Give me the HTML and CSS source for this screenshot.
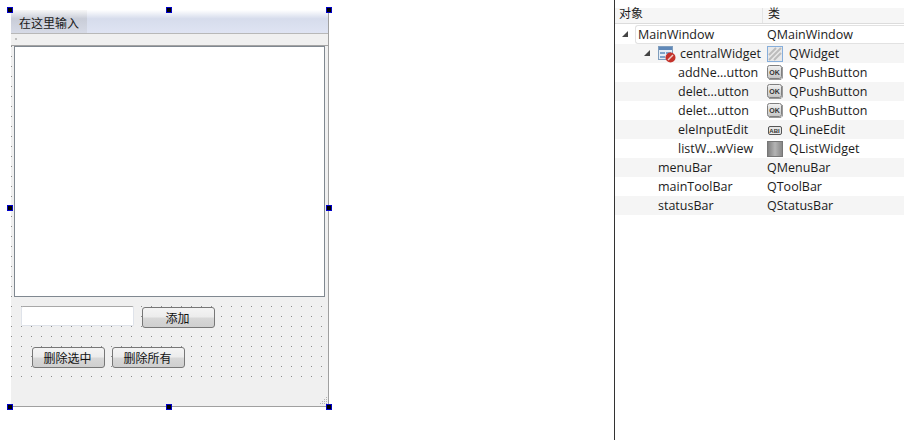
FILE: index.html
```html
<!DOCTYPE html>
<html lang="zh">
<head>
<meta charset="utf-8">
<title>Qt Designer</title>
<link rel="stylesheet" href="styles.css">
</head>
<body>
<main class="canvas">
  <div class="form">
    <div class="menubar"><span class="menu-item">在这里输入</span></div>
    <div class="toolbar"><i class="tool-grip"></i></div>
    <div class="central">
      <div class="list"></div>
      <div class="row row-add">
        <input class="line-edit" type="text">
        <button class="btn" type="button">添加</button>
      </div>
      <div class="row row-del">
        <button class="btn" type="button">删除选中</button>
        <button class="btn" type="button">删除所有</button>
      </div>
    </div>
    <div class="statusbar">
      <svg class="grip" width="11" height="11" viewBox="0 0 11 11"><g fill="#b4b4b4"><rect x="8" y="1" width="1" height="1"/><rect x="6" y="3" width="1" height="1"/><rect x="8" y="3" width="1" height="1"/><rect x="4" y="5" width="1" height="1"/><rect x="6" y="5" width="1" height="1"/><rect x="8" y="5" width="1" height="1"/><rect x="2" y="7" width="1" height="1"/><rect x="4" y="7" width="1" height="1"/><rect x="6" y="7" width="1" height="1"/><rect x="8" y="7" width="1" height="1"/></g></svg>
    </div>
    <i class="handle h-tl"></i><i class="handle h-tc"></i><i class="handle h-tr"></i>
    <i class="handle h-ml"></i><i class="handle h-mr"></i>
    <i class="handle h-bl"></i><i class="handle h-bc"></i><i class="handle h-br"></i>
  </div>
</main>
<aside class="inspector">
  <svg class="defs" width="0" height="0"><defs>
    <linearGradient id="okg" x1="0" y1="0" x2="0" y2="1"><stop offset="0" stop-color="#f2f2f2"/><stop offset="1" stop-color="#c4c4c4"/></linearGradient>
    <linearGradient id="lw"><stop offset="0" stop-color="#7d7d7d"/><stop offset=".5" stop-color="#b4b4b4"/><stop offset="1" stop-color="#858585"/></linearGradient>
    <g id="ok"><rect x="0.5" y="0.5" width="14" height="13" rx="2" fill="url(#okg)" stroke="#808080"/><path d="M2 14.5H14L15.5 13V2" fill="none" stroke="#9a9a9a"/><text x="7.5" y="9.5" class="ok-text">OK</text></g>
  </defs></svg>
  <div class="head"><span class="col-name">对象</span><span class="col-class">类</span></div>
  <div class="tree">
    <div class="tr selected"><span class="col-name l0"><i class="arrow a0"></i><span class="sel-text">MainWindow</span></span><span class="col-class">QMainWindow</span></div>
    <div class="tr alt"><span class="col-name l1"><i class="arrow a1"></i>
      <svg class="obj-icon" width="18" height="18" viewBox="0 0 18 18"><rect x="0.5" y="1.5" width="14" height="13" fill="#e4edf6" stroke="#7f9dbd"/><rect x="1" y="2" width="13" height="3" fill="#5f88b8"/><rect x="2" y="7" width="5" height="2" fill="#7fa3c9"/><rect x="8" y="7" width="5" height="2" fill="#7fa3c9"/><rect x="2" y="11" width="5" height="2" fill="#7fa3c9"/><circle cx="12.5" cy="12.5" r="5" fill="#c4322a"/><path d="M10 15 15 10" stroke="#f0cfc9" stroke-width="1.4"/></svg>
      <span>centralWidget</span></span>
      <span class="col-class"><svg class="cls-icon" width="16" height="16" viewBox="0 0 16 16"><rect x="0.5" y="0.5" width="15" height="15" fill="#e8e8e8" stroke="#86aedb"/><path d="M2 9 9 2M2 14 14 2M7 14 14 7" stroke="#bcbcbc" stroke-width="2"/></svg>QWidget</span></div>
    <div class="tr"><span class="col-name l2">addNe...utton</span><span class="col-class"><svg class="cls-icon" width="16" height="16" viewBox="0 0 16 16"><use href="#ok"/></svg>QPushButton</span></div>
    <div class="tr alt"><span class="col-name l2">delet...utton</span><span class="col-class"><svg class="cls-icon" width="16" height="16" viewBox="0 0 16 16"><use href="#ok"/></svg>QPushButton</span></div>
    <div class="tr"><span class="col-name l2">delet...utton</span><span class="col-class"><svg class="cls-icon" width="16" height="16" viewBox="0 0 16 16"><use href="#ok"/></svg>QPushButton</span></div>
    <div class="tr alt"><span class="col-name l2">eleInputEdit</span><span class="col-class"><svg class="cls-icon" width="16" height="16" viewBox="0 0 16 16"><rect x="1.5" y="4.5" width="13" height="8" rx="1.5" fill="#e6e6e6" stroke="#555"/><text x="7.5" y="11" class="abi-text">ABI</text></svg>QLineEdit</span></div>
    <div class="tr"><span class="col-name l2">listW...wView</span><span class="col-class"><svg class="cls-icon" width="16" height="16" viewBox="0 0 16 16"><rect x="0.5" y="0.5" width="15" height="15" fill="url(#lw)" stroke="#777"/></svg>QListWidget</span></div>
    <div class="tr alt"><span class="col-name l1b">menuBar</span><span class="col-class">QMenuBar</span></div>
    <div class="tr"><span class="col-name l1b">mainToolBar</span><span class="col-class">QToolBar</span></div>
    <div class="tr alt"><span class="col-name l1b">statusBar</span><span class="col-class">QStatusBar</span></div>
  </div>
</aside>
</body>
</html>
```

FILE: styles.css
```css
* { box-sizing: border-box; }
html, body { margin: 0; height: 100%; }
body {
  display: flex;
  width: 904px;
  height: 440px;
  overflow: hidden;
  background: #fff;
  font-family: "Noto Sans CJK SC", sans-serif;
  font-size: 12px;
  color: #1a1a1a;
}
.canvas { width: 614px; flex: none; padding: 10px 0 0 11px; }
.form {
  position: relative;
  width: 318px;
  height: 397px;
  display: flex;
  flex-direction: column;
  background: #f0f0f0;
  border-right: 1px solid #a0a0a0;
  border-bottom: 1px solid #a0a0a0;
}
.menubar {
  height: 24px;
  flex: none;
  background: linear-gradient(#fff 0, #d6dcec 38%, #dfe4f3 100%);
  border-bottom: 1px solid #b8b8b8;
}
.menu-item {
  display: inline-block;
  width: 76px;
  height: 23px;
  padding: 4px 0 0 8px;
  line-height: 17px;
  background: linear-gradient(#f8f8f8 0, #c9cdd8 38%, #d6dae6 100%);
}
.toolbar {
  height: 12px;
  flex: none;
  position: relative;
  background: #f0f0f0;
  border-bottom: 1px solid #a4a4a4;
}
.tool-grip { position: absolute; left: 4px; top: 4px; width: 2px; height: 2px; background: #c0c0c0; }
.central {
  height: 331px;
  flex: none;
  padding: 0 3px;
  background-image: radial-gradient(circle at 0.5px 0.5px, #8c8c8c 0.7px, transparent 0.7px);
  background-size: 10px 10px;
  background-position: 0 0;
}
.list {
  width: 311px;
  height: 251px;
  background: #fff;
  border: 1px solid #808890;
}
.row { display: flex; align-items: flex-start; }
.row-add { margin-top: 9px; padding-left: 7px; gap: 8px; }
.row-del { margin-top: 18px; padding-left: 18px; gap: 7px; }
.line-edit {
  width: 113px;
  height: 20px;
  margin: 0;
  padding: 0;
  background: #fff;
  border: 1px solid #dfe3ea;
  border-top-color: #a8a8a8;
  border-radius: 2px;
}
.btn {
  width: 73px;
  height: 21px;
  margin: 1px 0 0;
  padding: 0 2px 0 0;
  font: 12px/18px "Noto Sans CJK SC", sans-serif;
  color: #111;
  border: 1px solid #777;
  border-radius: 3px;
  background: linear-gradient(#f4f4f4 0, #ececec 48%, #d8d8d8 52%, #cfcfcf 100%);
}
.statusbar { flex: 1; position: relative; background: #f0f0f0; }
.grip { position: absolute; right: -1px; bottom: -1px; }
.handle { position: absolute; width: 6px; height: 6px; background: #000; border: 1px solid #0000c8; }
.h-tl { left: -4px; top: -3px; }
.h-tc { left: 155px; top: -3px; }
.h-tr { left: 315px; top: -3px; }
.h-ml { left: -4px; top: 195px; }
.h-mr { left: 315px; top: 195px; }
.h-bl { left: -4px; top: 394px; }
.h-bc { left: 155px; top: 394px; }
.h-br { left: 315px; top: 394px; }

.inspector {
  width: 290px;
  flex: none;
  height: 440px;
  padding-top: 8px;
  border-left: 1px solid #333;
  font-family: "Open Sans", "Noto Sans CJK SC", sans-serif;
  font-size: 12.5px;
  color: #1c1c1c;
}
.head {
  display: flex;
  height: 16px;
  background: #f6f6f6;
  border-bottom: 1px solid #dcdcdc;
  font-family: "Noto Sans CJK SC", sans-serif;
  font-size: 12px;
}
.head .col-name { padding-left: 4px; border-right: 1px solid #e4e4e4; align-items: flex-start; line-height: 10px; }
.head .col-class { padding-left: 5px; align-items: flex-start; line-height: 10px; }
.tree { padding-top: 1px; }
.tr { display: flex; height: 19px; align-items: center; line-height: 19px; position: relative; }
.alt { background: #f5f5f5; }
.col-name { width: 148px; height: 100%; flex: none; display: flex; align-items: center; white-space: nowrap; }
.col-class { padding-left: 4px; display: flex; align-items: center; white-space: nowrap; }
.l0 { padding-left: 23px; }
.l1 { padding-left: 43px; }
.l2 { padding-left: 63px; }
.l1b { padding-left: 43px; }
.selected::before {
  content: "";
  position: absolute;
  left: 20px;
  right: 0;
  top: 0;
  bottom: 0;
  border: 1px solid #e2e2e2;
  border-right: 0;
  border-radius: 3px 0 0 3px;
}
.arrow { position: absolute; width: 0; height: 0; border-style: solid; border-width: 0 0 6px 6px; border-color: transparent transparent #444 transparent; top: 6px; }
.a0 { left: 7px; }
.a1 { left: 29px; }
.obj-icon { flex: none; margin-right: 4px; }
.cls-icon { flex: none; margin-right: 6px; }
.ok-text { font: bold 7px "Liberation Sans", sans-serif; fill: #333; text-anchor: middle; }
.abi-text { font: bold 6px "Liberation Sans", sans-serif; fill: #333; text-anchor: middle; }
.defs { position: absolute; }
```
